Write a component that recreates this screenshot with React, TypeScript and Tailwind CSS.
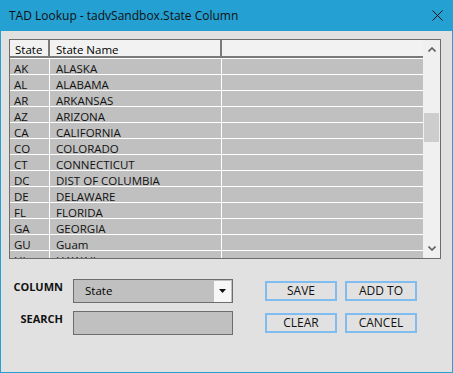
import React from "react";

const states: [string, string][] = [
  ["AK", "ALASKA"],
  ["AL", "ALABAMA"],
  ["AR", "ARKANSAS"],
  ["AZ", "ARIZONA"],
  ["CA", "CALIFORNIA"],
  ["CO", "COLORADO"],
  ["CT", "CONNECTICUT"],
  ["DC", "DIST OF COLUMBIA"],
  ["DE", "DELAWARE"],
  ["FL", "FLORIDA"],
  ["GA", "GEORGIA"],
  ["GU", "Guam"],
  ["HI", "HAWAII"],
];

function Chevron({ down }: { down?: boolean }) {
  return (
    <svg width="8" height="5" viewBox="0 0 8 5" className="block">
      <path
        d={down ? "M0.5 0.5 L4 4 L7.5 0.5" : "M0.5 4.5 L4 1 L7.5 4.5"}
        fill="none"
        stroke="#606060"
        strokeWidth="1.6"
      />
    </svg>
  );
}

function Btn({ label }: { label: string }) {
  return (
    <button className="w-[72px] h-[20px] border-2 border-[#80bcef] bg-[#e1e1e1] text-[12px] leading-none text-[#111] flex items-center justify-center">
      {label}
    </button>
  );
}

export default function App() {
  return (
    <div
      className="w-[453px] h-[373px] bg-[#24a0d2] px-px pb-px flex flex-col text-black"
      style={{ fontFamily: '"Open Sans", "Noto Sans", sans-serif' }}
    >
      {/* title bar */}
      <div className="h-[31px] flex items-center justify-between pl-2 pr-[9px] shrink-0">
        <span className="text-[12px] text-[#111]">TAD Lookup - tadvSandbox.State Column</span>
        <svg width="11" height="11" viewBox="0 0 11 11">
          <path d="M0.5 0.5 L10.5 10.5 M10.5 0.5 L0.5 10.5" stroke="#111" strokeWidth="1" />
        </svg>
      </div>

      <div className="flex-1 bg-[#e1e1e1] pt-2 pl-2 pr-[11px]">
        {/* grid */}
        <div className="h-[220px] w-[432px] border border-[#6d6d6d] flex overflow-hidden text-[11.5px]">
          <div className="flex-1 flex flex-col overflow-hidden">
            <div className="h-[18px] shrink-0 flex bg-[#f2f2f2] border-b-2 border-[#7a7a7a]">
              <div className="w-[40px] border-r-2 border-[#7a7a7a] pl-[5px] pt-[3px] flex items-center">State</div>
              <div className="w-[172px] border-r-2 border-[#7a7a7a] pl-[6px] pt-[3px] flex items-center">State Name</div>
              <div className="flex-1" />
            </div>
            {states.map(([code, name]) => (
              <div key={code} className="h-[16px] shrink-0 flex bg-[#c0c0c0] border-t border-white text-[#111]">
                <div className="w-[40px] border-r border-white pl-[4px] pt-[4px] flex items-center">{code}</div>
                <div className="w-[172px] border-r border-white pl-[6px] pt-[4px] flex items-center">{name}</div>
                <div className="flex-1" />
              </div>
            ))}
          </div>
          <div className="w-[17px] bg-[#f0f0f0] flex flex-col items-center">
            <div className="h-[17px] flex items-center justify-center pt-[2px]">
              <Chevron />
            </div>
            <div className="flex-1 w-full pt-[56px] px-px">
              <div className="h-[29px] bg-[#cdcdcd]" />
            </div>
            <div className="h-[17px] flex items-center justify-center pb-[2px]">
              <Chevron down />
            </div>
          </div>
        </div>

        {/* controls */}
        <div className="flex pt-5">
          <div className="grid grid-cols-[54px_160px] gap-x-[10px] gap-y-2">
            <span className="self-start text-[11px] leading-[16px] font-bold text-right text-[#111]">COLUMN</span>
            <div className="h-[24px] border border-[#6d6d6d] bg-[#c0c0c0] flex items-center">
              <span className="flex-1 pl-[11px] text-[11.5px]">State</span>
              <div className="w-[17px] h-[21px] bg-[#f7f7f7] mr-px flex items-center justify-center">
                <svg width="7" height="4" viewBox="0 0 7 4">
                  <path d="M0 0 H7 L3.5 4 Z" fill="#111" />
                </svg>
              </div>
            </div>
            <span className="self-start text-[11px] leading-[16px] font-bold text-right text-[#111]">SEARCH</span>
            <div className="h-[24px] border border-[#6d6d6d] bg-[#c0c0c0]" />
          </div>
          <div className="grid grid-cols-[72px_72px] gap-x-2 gap-y-3 pl-8 pt-[2px] content-start">
            <Btn label="SAVE" />
            <Btn label="ADD TO" />
            <Btn label="CLEAR" />
            <Btn label="CANCEL" />
          </div>
        </div>
      </div>
    </div>
  );
}
